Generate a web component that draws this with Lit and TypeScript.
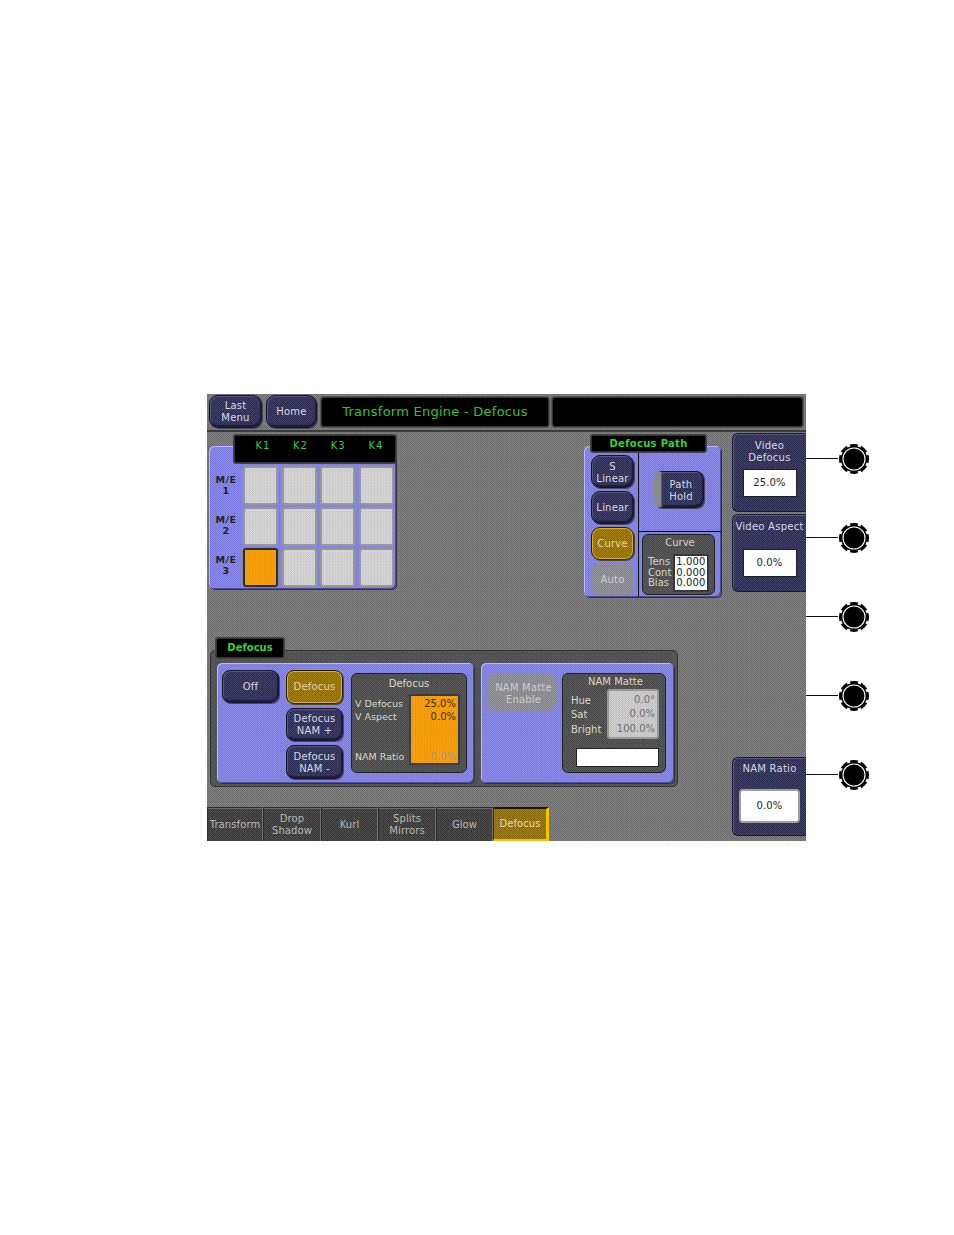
import { LitElement, html, css, svg } from "lit";
import { customElement } from "lit/decorators.js";

const knob = () => html`<svg class="knob" width="32" height="32" viewBox="-16 -16 32 32">
  <circle r="15" fill="#000"></circle>
  ${[0, 45, 90, 135, 180, 225, 270, 315].map(
    (a) => svg`<rect x="-1.6" y="-16" width="3.2" height="3" fill="#fff" transform="rotate(${a + 22.5})"></rect>`
  )}
  <circle r="11" fill="none" stroke="#fff" stroke-width="1.1"></circle>
</svg>`;

@customElement("app-root")
class AppRoot extends LitElement {
  static styles = css`
    :host {
      display: block;
      width: 954px;
      height: 1235px;
      background: #fff;
      font-family: "DejaVu Sans", Verdana, sans-serif;
      font-size: 10px;
      line-height: 12px;
      overflow: hidden;
    }
    .page { display: flex; padding: 394px 0 0 207px; }
    .tex {
      background-image:
        repeating-conic-gradient(rgba(0, 0, 0, .05) 0 25%, transparent 0 50%),
        repeating-conic-gradient(rgba(255, 255, 255, .04) 0 25%, transparent 0 50%),
        repeating-conic-gradient(var(--a) 0 25%, var(--b) 0 50%);
      background-size: 3px 3px, 5px 5px, 2px 2px;
    }
    .screen {
      --a: #696969; --b: #868686;
      width: 599px; height: 447px; display: flex; flex-direction: column; overflow: hidden;
    }
    .topbar {
      display: flex; align-items: flex-start; height: 35px; padding: 1px 0 0 2px;
      border-bottom: 2px solid #3c3c3c; gap: 4px;
    }
    .btn {
      --a: #282850; --b: #3e3e68;
      display: flex; align-items: center; justify-content: center; text-align: center;
      color: #d8d8e0; border-radius: 8px; box-sizing: border-box; letter-spacing: .2px;
      border: 1px solid #14142c;
      box-shadow: inset 1px 1px 0 #55557f, inset -1px -2px 1px #1c1c38, 1px 1px 0 #4a4a5c;
    }
    .gold {
      --a: #8c6a08; --b: #a88210; color: #e0d4a4; border-color: #2a2000;
      box-shadow: inset 0 0 0 1px #e0b018, 1px 1px 0 #4a4a30;
    }
    .ghost {
      --a: #85858f; --b: #97979f; color: #d0d0c0; border: none; box-shadow: none;
    }
    .last { width: 53px; height: 33px; border-radius: 9px; }
    .home { width: 51px; height: 33px; border-radius: 9px; }
    .display {
      background: #000; height: 30px; border: 1px solid #333; border-radius: 3px;
      box-shadow: 0 0 0 1px #555; box-sizing: border-box; display: flex; align-items: center; justify-content: center;
      color: #36c236; font-size: 13px; letter-spacing: .25px; margin-top: 2px;
    }
    .title { width: 228px; }
    .blank { width: 251px; margin-left: -1px; }
    .main { flex: 1; display: flex; min-height: 0; }
    .left { width: 525px; display: flex; flex-direction: column; }
    .top-row { display: flex; justify-content: space-between; padding: 3px 11px 0 2px; height: 165px; box-sizing: border-box; }

    .panel {
      --a: #7a7ae4; --b: #8e8ef0;
      border-radius: 5px; box-sizing: border-box;
      box-shadow: inset 1px 1px 0 #b8b8ff, inset -1px -1px 0 #4a4aa0, 1px 1px 0 #333;
    }
    .hdr { background: #000; position: relative; color: #36d236; font-weight: 700; font-size: 10px; box-sizing: border-box; border: 1px solid #333; box-shadow: 0 0 0 1px #444; border-radius: 2px; }

    .kblock { width: 187px; display: flex; flex-direction: column; }
    .khdr { align-self: flex-end; width: 162px; height: 28px; display: grid; grid-template-columns: repeat(4, 37.7px); padding: 4px 0 0 9px; text-align: center; font-weight: 400; letter-spacing: 1px; }
    .kpanel { height: 143px; margin-top: -17px; display: flex; padding: 20px 0 0 0; }
    .me { width: 34px; display: flex; flex-direction: column; font-weight: 700; font-size: 9.5px; line-height: 11px; color: #222; text-align: center; padding-top: 8px; box-sizing: border-box; gap: 18px; letter-spacing: .5px; }
    .kgrid { display: grid; grid-template-columns: repeat(4, 35px); grid-auto-rows: 39px; column-gap: 3.5px; row-gap: 2px; }
    .cell { --a: #cdcdcd; --b: #dedede; border: 2px solid #979797; border-radius: 3px; box-sizing: border-box; }
    .cell.on { --a: #f59a00; --b: #ffa800; border: 2px solid #2c2c3c; box-shadow: 0 0 0 1px #888; }

    .pblock { width: 137px; display: flex; flex-direction: column; }
    .phdr { align-self: center; width: 115px; height: 17px; margin-left: -8px; text-align: center; line-height: 15px; letter-spacing: .3px; }
    .ppanel { height: 154px; margin-top: -6px; display: flex; }
    .pcol { width: 55px; box-sizing: border-box; border-right: 1px solid #111; padding: 9px 0 0 7px; display: flex; flex-direction: column; gap: 3px; }
    .pcol .btn { width: 43px; height: 33px; border-radius: 9px; }
    .pcol .btn:first-child { padding-top: 2px; }
    .pright { flex: 1; display: flex; flex-direction: column; }
    .holdzone { height: 86px; border-bottom: 1px solid #111; display: flex; padding: 25px 0 0 15px; box-sizing: border-box; }
    .hold { width: 50px; height: 37px; border-left: 7px solid #8a8a8a; padding: 2px 2px 0 0; }
    .curve {
      --a: #484848; --b: #5a5a5a; width: 73px; height: 61px; margin: 2px 0 0 3px; border-radius: 6px; border: 1px solid #222; box-sizing: border-box;
      color: #d4d4c4; display: flex; flex-direction: column; align-items: center; padding-top: 2px;
    }
    .curve-title { padding-left: 3px; }
    .curve-body { display: flex; align-self: stretch; padding: 6px 0 0 5px; gap: 3px; line-height: 10.5px; }
    .curve-labels { padding-top: 2px; }
    .whitebox { background: #fff; color: #222; border: 1px solid #333; box-shadow: 0 0 0 1px #3a3a3a; width: 34px; height: 36px; box-sizing: border-box; text-align: right; padding: 1px 2px 0 0; line-height: 10.5px; letter-spacing: .1px; }

    .group-wrap { margin: 41px 0 0 3px; display: flex; flex-direction: column; }
    .gtab { margin-left: 6px; width: 68px; height: 20px; line-height: 17px; text-align: center; z-index: 1; }
    .group { --a: #4a4a4a; --b: #5c5c5c; margin-top: -8px; width: 468px; height: 137px; border-radius: 5px; box-sizing: border-box; padding: 12px 0 0 6px; display: flex; gap: 7px; border: 1px solid #333; }
    .gpanel { height: 120px; }
    .g1 { width: 257px; display: flex; padding: 7px 0 0 5px; box-sizing: border-box; }
    .g2 { width: 193px; display: flex; padding: 10px 0 0 6px; box-sizing: border-box; }
    .offcol { width: 64px; }
    .offcol .btn { width: 57px; height: 33px; }
    .defcol { width: 65px; display: flex; flex-direction: column; gap: 4px; }
    .defcol .btn { width: 57px; height: 33.5px; }
    .defcol .btn:not(.gold) { padding-top: 2px; }
    .rd {
      --a: #474747; --b: #5a5a5a; box-sizing: border-box; border: 1px solid #222; border-radius: 6px; color: #d8d8c0;
      height: 100px; display: flex; flex-direction: column;
    }
    .rd1 { width: 116px; margin-top: 3px; }
    .rd-title { text-align: center; padding-top: 4px; }
    .rd-body { display: flex; padding: 4px 0 0 3px; justify-content: space-between; }
    .rd-labels { display: grid; grid-template-rows: 13px 13px 27px 13px; padding-top: 4px; font-size: 9.5px; }
    .orange { --a: #f59a00; --b: #ffa800; width: 51px; height: 71px; box-sizing: border-box; border: 2px solid #3a3a50; margin-right: 6px; color: #3a2a00; text-align: right; padding: 2px 2px 0 0; display: grid; grid-template-rows: 13px 13px 27px 13px; }
    .orange .faint { color: #9a9a9a; }
    .enable { width: 70px; height: 39px; border-radius: 10px; margin-right: 5px; padding: 2px 0 0 3px; }
    .rd2 { width: 104px; }
    .rd2 .rd-title { padding: 2px 0 0 3px; }
    .rd2-body { display: flex; justify-content: space-between; padding: 1px 6px 0 8px; }
    .rd2-labels { display: grid; grid-template-rows: 14px 14.5px 14px; padding-top: 6px; }
    .greybox { --a: #c4c4c4; --b: #d6d6d6; width: 52px; height: 50px; border-radius: 3px; border: 2px solid #999; box-sizing: border-box; color: #707070; text-align: right; padding: 3px 2px 0 0; display: grid; grid-template-rows: 14px 14.5px 14px; }
    .swatch { width: 83px; height: 19px; background: #fff; border: 1px solid #222; box-sizing: border-box; margin: 9px 0 0 13px; }

    .tabs { margin-top: auto; display: grid; grid-template-columns: 56px 58px 57px 58px 57px 56px; height: 34px; }
    .tab {
      --a: #343434; --b: #4c4c4c; box-sizing: border-box; display: flex; align-items: center; justify-content: center; text-align: center;
      color: #b8b8b0; border-right: 1px solid #707070; border-left: 1px solid #2c2c2c; border-top: 1px solid #2c2c2c; line-height: 12px; letter-spacing: .1px;
      box-shadow: inset 0 1px 0 #6c6c6c;
    }
    .tab.on { --a: #8a6806; --b: #a68010; color: #e8d8a0; border: none; border-top: 2px solid #1c1c00; border-right: 3px solid #f4c400; border-bottom: 2px solid #f4c400; border-left: 1px solid #333; box-shadow: none; }

    .softs { width: 74px; display: flex; flex-direction: column; padding-top: 1px; box-sizing: border-box; }
    .soft {
      --a: #282850; --b: #3e3e68; box-sizing: border-box; border-radius: 6px 0 0 6px; color: #d8d8e0; text-align: center; display: flex; flex-direction: column; align-items: center;
      border: 1px solid #1c1c34; border-right: none; box-shadow: inset 1px 1px 0 #56567e; height: 79px; padding-top: 6px; letter-spacing: .25px;
    }
    .soft.a { margin-top: 2px; height: 78px; white-space: nowrap; }
    .soft.c { margin-top: auto; margin-bottom: 5px; padding-top: 5px; }
    .val { background: #fff; color: #222; width: 54px; height: 28px; display: flex; align-items: center; justify-content: center; box-sizing: border-box; border: 1px solid #222; letter-spacing: .1px; }
    .soft .m1 { margin-top: 5px; }
    .soft .m2 { margin-top: 16px; }
    .val.grey { --a: #c4c4c4; --b: #dadada; width: 61px; height: 34px; border: 2px solid #a0a0a0; border-radius: 4px; margin-top: 14px; }

    .knobs { display: flex; flex-direction: column; margin-top: 25px; }
    .krow { height: 79px; display: flex; align-items: center; }
    .wire { width: 32px; height: 1px; background: #111; }
    .knob { display: block; }
  `;

  render() {
    const rows = [0, 1, 2];
    return html`<div class="page">
      <div class="screen tex">
        <div class="topbar">
          <div class="btn tex last">Last<br />Menu</div>
          <div class="btn tex home">Home</div>
          <div class="display title">Transform Engine - Defocus</div>
          <div class="display blank"></div>
        </div>
        <div class="main">
          <div class="left">
            <div class="top-row">
              <div class="kblock">
                <div class="hdr khdr"><span>K1</span><span>K2</span><span>K3</span><span>K4</span></div>
                <div class="panel tex kpanel">
                  <div class="me"><div>M/E<br />1</div><div>M/E<br />2</div><div>M/E<br />3</div></div>
                  <div class="kgrid">
                    ${rows.flatMap((r) =>
                      [0, 1, 2, 3].map((c) => html`<div class="cell tex ${r === 2 && c === 0 ? "on" : ""}"></div>`)
                    )}
                  </div>
                </div>
              </div>
              <div class="pblock">
                <div class="hdr phdr">Defocus Path</div>
                <div class="panel tex ppanel">
                  <div class="pcol">
                    <div class="btn tex">S<br />Linear</div>
                    <div class="btn tex">Linear</div>
                    <div class="btn tex gold">Curve</div>
                    <div class="btn tex ghost">Auto</div>
                  </div>
                  <div class="pright">
                    <div class="holdzone"><div class="btn tex hold">Path<br />Hold</div></div>
                    <div class="curve tex">
                      <div class="curve-title">Curve</div>
                      <div class="curve-body">
                        <div class="curve-labels">Tens<br />Cont<br />Bias</div>
                        <div class="whitebox">1.000<br />0.000<br />0.000</div>
                      </div>
                    </div>
                  </div>
                </div>
              </div>
            </div>
            <div class="group-wrap">
              <div class="hdr gtab">Defocus</div>
              <div class="group tex">
                <div class="panel tex gpanel g1">
                  <div class="offcol"><div class="btn tex">Off</div></div>
                  <div class="defcol">
                    <div class="btn tex gold">Defocus</div>
                    <div class="btn tex">Defocus<br />NAM +</div>
                    <div class="btn tex">Defocus<br />NAM -</div>
                  </div>
                  <div class="rd tex rd1">
                    <div class="rd-title">Defocus</div>
                    <div class="rd-body">
                      <div class="rd-labels"><span>V Defocus</span><span>V Aspect</span><span></span><span>NAM Ratio</span></div>
                      <div class="orange tex"><span>25.0%</span><span>0.0%</span><span></span><span class="faint">0.0%</span></div>
                    </div>
                  </div>
                </div>
                <div class="panel tex gpanel g2">
                  <div class="btn tex ghost enable">NAM Matte<br />Enable</div>
                  <div class="rd tex rd2">
                    <div class="rd-title">NAM Matte</div>
                    <div class="rd2-body">
                      <div class="rd2-labels"><span>Hue</span><span>Sat</span><span>Bright</span></div>
                      <div class="greybox tex"><span>0.0°</span><span>0.0%</span><span>100.0%</span></div>
                    </div>
                    <div class="swatch"></div>
                  </div>
                </div>
              </div>
            </div>
            <div class="tabs">
              <div class="tab tex">Transform</div>
              <div class="tab tex">Drop<br />Shadow</div>
              <div class="tab tex">Kurl</div>
              <div class="tab tex">Splits<br />Mirrors</div>
              <div class="tab tex">Glow</div>
              <div class="tab tex on">Defocus</div>
            </div>
          </div>
          <div class="softs">
            <div class="soft tex">Video<br />Defocus<div class="val m1">25.0%</div></div>
            <div class="soft tex a">Video Aspect<div class="val m2">0.0%</div></div>
            <div class="soft tex c">NAM Ratio<div class="val tex grey">0.0%</div></div>
          </div>
        </div>
      </div>
      <div class="knobs">
        ${[0, 1, 2, 3, 4].map(() => html`<div class="krow"><div class="wire"></div>${knob()}</div>`)}
      </div>
    </div>`;
  }
}
